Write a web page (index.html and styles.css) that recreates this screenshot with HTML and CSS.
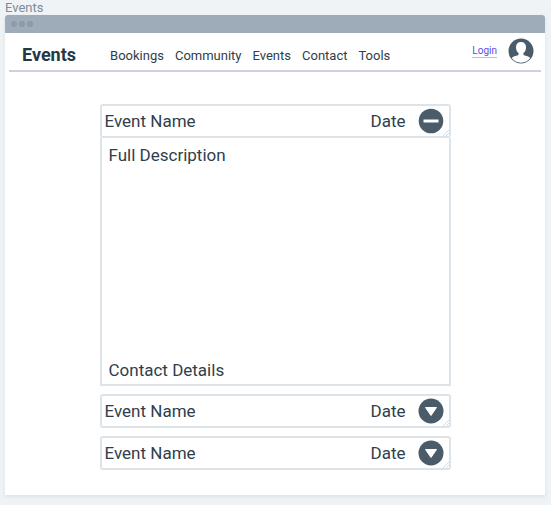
FILE: index.html
```html
<!DOCTYPE html>
<html lang="en">
<head>
  <meta charset="utf-8">
  <meta name="viewport" content="width=device-width, initial-scale=1">
  <title>Events</title>
  <link rel="stylesheet" href="styles.css">
</head>
<body>
  <div class="caption">Events</div>
  <div class="window">
    <div class="titlebar"><i class="dot"></i><i class="dot"></i><i class="dot"></i></div>
    <header class="header">
      <h1 class="brand">Events</h1>
      <nav class="nav">
        <a href="#">Bookings</a>
        <a href="#">Community</a>
        <a href="#">Events</a>
        <a href="#">Contact</a>
        <a href="#">Tools</a>
      </nav>
      <a class="login" href="#">Login</a>
      <svg class="avatar" viewBox="0 0 26 26" aria-hidden="true">
        <circle cx="13" cy="13" r="12.500" fill="#4a5b69"/>
        <path d="M13 4c3.200 0 5 2 5 5.200 0 2.600-.9 4.700-2.600 5.900v1.200c0 .7.500 1 1.300 1.200 2.800.6 4.600 1.400 5.600 2.600A11.700 11.700 0 0 1 13 24.700a11.700 11.700 0 0 1-9.300-4.600c1-1.200 2.800-2 5.600-2.600.8-.2 1.300-.5 1.300-1.200v-1.200C8.900 13.900 8 11.800 8 9.200 8 6 9.800 4 13 4z" fill="#fff"/>
      </svg>
    </header>
    <main class="events">
      <article class="event">
        <div class="row">
          <h2 class="name">Event Name</h2>
          <span class="date">Date</span>
          <button class="toggle" type="button" aria-expanded="true" aria-label="Collapse event">
            <svg viewBox="0 0 26 26"><circle cx="13" cy="13" r="12.300"/><path d="M5.500 11.500h15v3h-15z"/></svg>
          </button>
          <svg class="grip" viewBox="0 0 6 6"><path d="M0 6L6 0M3 6L6 3"/></svg>
        </div>
        <div class="details">
          <p>Full Description</p>
          <p>Contact Details</p>
        </div>
      </article>
      <article class="event">
        <div class="row">
          <h2 class="name">Event Name</h2>
          <span class="date">Date</span>
          <button class="toggle" type="button" aria-expanded="false" aria-label="Expand event">
            <svg viewBox="0 0 26 26"><circle cx="13" cy="13" r="12.500"/><path class="arrow" d="M7.500 9.500h11L13 17.500z"/></svg>
          </button>
          <svg class="grip" viewBox="0 0 6 6"><path d="M0 6L6 0M3 6L6 3"/></svg>
        </div>
      </article>
      <article class="event">
        <div class="row">
          <h2 class="name">Event Name</h2>
          <span class="date">Date</span>
          <button class="toggle" type="button" aria-expanded="false" aria-label="Expand event">
            <svg viewBox="0 0 26 26"><circle cx="13" cy="13" r="12.500"/><path class="arrow" d="M7.500 9.500h11L13 17.500z"/></svg>
          </button>
          <svg class="grip" viewBox="0 0 6 6"><path d="M0 6L6 0M3 6L6 3"/></svg>
        </div>
      </article>
    </main>
  </div>
</body>
</html>
```

FILE: styles.css
```css
* {
  box-sizing: border-box;
}

body {
  margin: 0;
  padding: 0 6px 10px 5px;
  background: #eff3f6;
  color: #2f3e4b;
  font-family: Roboto, "Liberation Sans", sans-serif;
}

.caption {
  height: 15px;
  font-size: 13px;
  line-height: 15px;
  color: #7b8b98;
}

.window {
  background: #fff;
  border-radius: 3px 3px 0 0;
  box-shadow: 0 2px 4px rgba(60, 80, 100, 0.1);
}

.titlebar {
  display: flex;
  align-items: center;
  gap: 2px;
  height: 18px;
  padding-left: 6px;
  border-radius: 3px 3px 0 0;
  background: #9dacb8;
}

.dot {
  width: 6px;
  height: 6px;
  border-radius: 50%;
  background: #8b9ba9;
}

.header {
  display: flex;
  align-items: center;
  height: 39px;
  margin: 0 4px;
  padding: 0 7px 0 13px;
  border-bottom: 2px solid #cdd1dd;
}

.brand {
  margin: 0;
  padding-top: 6px;
  font-size: 18px;
  line-height: 20px;
  font-weight: 700;
  color: #263845;
}

.nav {
  display: flex;
  gap: 11px;
  margin-left: 34px;
  padding-top: 8px;
  font-size: 13px;
  line-height: 20px;
}

.nav a {
  color: inherit;
  text-decoration: none;
}

.login {
  margin-left: auto;
  border-bottom: 1px solid #c3b8f5;
  font-size: 10px;
  line-height: 12px;
  color: #604be0;
  text-decoration: none;
}

.avatar {
  width: 26px;
  height: 26px;
  margin: 0 0 2px 11px;
}

.events {
  display: flex;
  flex-direction: column;
  gap: 8px;
  width: 65%;
  min-width: 280px;
  margin: 0 auto;
  padding: 32px 0 25px;
}

.row {
  position: relative;
  display: flex;
  align-items: center;
  height: 34px;
  padding: 0 5px 0 3px;
  border: 2px solid #dce3e9;
  border-radius: 3px;
}

.name,
.date,
.details p {
  margin: 0;
  font-size: 17px;
  line-height: 22px;
  font-weight: 400;
}

.date {
  margin-left: auto;
}

.toggle {
  width: 26px;
  height: 26px;
  margin-left: 12px;
  padding: 0;
  border: 0;
  background: none;
}

.toggle svg {
  display: block;
  fill: #4a5b69;
}

.toggle path {
  fill: #fff;
}

.toggle .arrow {
  stroke: #fff;
  stroke-linejoin: round;
}

.grip {
  position: absolute;
  right: 0;
  bottom: 0;
  width: 6px;
  height: 6px;
  fill: none;
  stroke: #d5dce2;
}

.details {
  display: flex;
  flex-direction: column;
  justify-content: space-between;
  min-height: 248px;
  padding: 6px 7px 3px;
  border: 2px solid #dce3e9;
  border-top: 0;
}
```
